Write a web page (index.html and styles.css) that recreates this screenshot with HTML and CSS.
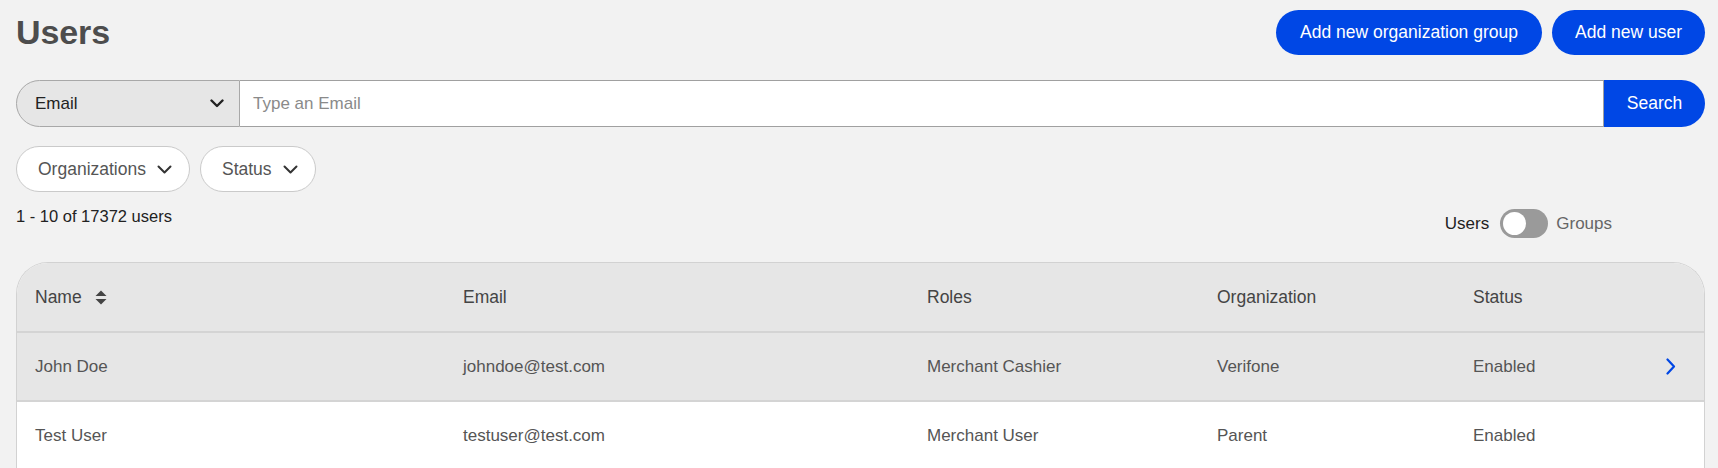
FILE: index.html
```html
<!DOCTYPE html>
<html lang="en">
<head>
<meta charset="utf-8">
<title>Users</title>
<link rel="stylesheet" href="styles.css">
</head>
<body>
<div class="page">
  <header class="top">
    <h1 class="title">Users</h1>
    <div class="actions">
      <button class="btn btn-group">Add new organization group</button>
      <button class="btn btn-user">Add new user</button>
    </div>
  </header>

  <div class="search">
    <div class="select">
      <span>Email</span>
      <svg class="chev" width="14" height="9" viewBox="0 0 14 9"><path d="M1.5 1.5 L7 7 L12.5 1.5" fill="none" stroke="#222" stroke-width="2.4" stroke-linecap="round" stroke-linejoin="round"/></svg>
    </div>
    <div class="input">Type an Email</div>
    <button class="search-btn">Search</button>
  </div>

  <div class="filters">
    <button class="chip">Organizations
      <svg class="chev" width="15" height="9" viewBox="0 0 15 9"><path d="M1.5 1.5 L7.5 7.5 L13.5 1.5" fill="none" stroke="#333" stroke-width="2" stroke-linecap="round" stroke-linejoin="round"/></svg>
    </button>
    <button class="chip">Status
      <svg class="chev" width="15" height="9" viewBox="0 0 15 9"><path d="M1.5 1.5 L7.5 7.5 L13.5 1.5" fill="none" stroke="#333" stroke-width="2" stroke-linecap="round" stroke-linejoin="round"/></svg>
    </button>
  </div>

  <div class="meta">
    <div class="count">1 - 10 of 17372 users</div>
    <div class="switch-group">
      <span class="lbl-on">Users</span>
      <span class="toggle"><span class="knob"></span></span>
      <span class="lbl-off">Groups</span>
    </div>
  </div>

  <div class="table">
    <div class="row head">
      <div class="cell">Name
        <svg class="sort" width="12" height="15" viewBox="0 0 12 15"><polygon points="0.5,6 6,0.5 11.5,6" fill="#444"/><polygon points="0.5,9 6,14.5 11.5,9" fill="#444"/></svg>
      </div>
      <div class="cell">Email</div>
      <div class="cell">Roles</div>
      <div class="cell">Organization</div>
      <div class="cell">Status</div>
    </div>
    <div class="row active">
      <div class="cell">John Doe</div>
      <div class="cell">johndoe@test.com</div>
      <div class="cell">Merchant Cashier</div>
      <div class="cell">Verifone</div>
      <div class="cell last">Enabled
        <svg class="go" width="10" height="17" viewBox="0 0 10 17"><path d="M1.5 1.5 L8 8.5 L1.5 15.5" fill="none" stroke="#0047e5" stroke-width="2.2" stroke-linecap="round" stroke-linejoin="round"/></svg>
      </div>
    </div>
    <div class="row">
      <div class="cell">Test User</div>
      <div class="cell">testuser@test.com</div>
      <div class="cell">Merchant User</div>
      <div class="cell">Parent</div>
      <div class="cell last">Enabled</div>
    </div>
  </div>
</div>
</body>
</html>
```

FILE: styles.css
```css
* { box-sizing: border-box; }

html, body {
  margin: 0;
  background: #f2f2f2;
  font-family: "Liberation Sans", Arial, sans-serif;
  color: #222;
}

.page {
  padding: 10px 13px 0 16px;
  height: 468px;
  overflow: hidden;
}

.top {
  display: flex;
  justify-content: space-between;
  align-items: center;
  height: 45px;
}

.title {
  margin: 0;
  font-size: 34px;
  line-height: 45px;
  font-weight: 700;
  color: #4d4d4d;
  letter-spacing: -0.1px;
}

.actions {
  display: flex;
  gap: 10px;
}

.btn {
  height: 45px;
  border: none;
  border-radius: 23px;
  background: #0047e5;
  color: #fff;
  font-family: inherit;
  font-size: 17.5px;
  display: flex;
  align-items: center;
  justify-content: center;
  padding: 0;
}

.btn-group { width: 266px; }
.btn-user { width: 153px; }

.search {
  display: flex;
  height: 47px;
  margin-top: 25px;
}

.select {
  width: 224px;
  background: #e6e6e6;
  border: 1px solid #a8a8a8;
  border-radius: 24px 0 0 24px;
  display: flex;
  align-items: center;
  justify-content: space-between;
  padding: 0 15px 0 18px;
  font-size: 17px;
  color: #222;
}

.input {
  flex: 1;
  background: #fff;
  border: 1px solid #a0a0a0;
  border-left: none;
  display: flex;
  align-items: center;
  padding-left: 13px;
  font-size: 17px;
  color: #8a8a8a;
}

.search-btn {
  width: 101px;
  border: none;
  background: #0047e5;
  color: #fff;
  border-radius: 0 24px 24px 0;
  font-family: inherit;
  font-size: 17.5px;
  padding: 0;
}

.filters {
  display: flex;
  gap: 10px;
  margin-top: 19px;
}

.chip {
  height: 46px;
  background: #fff;
  border: 1px solid #cacaca;
  border-radius: 23px;
  display: flex;
  align-items: center;
  gap: 11px;
  padding: 0 17px 0 21px;
  font-family: inherit;
  font-size: 17.5px;
  color: #555;
}

.meta {
  display: flex;
  justify-content: space-between;
  align-items: flex-start;
}

.count {
  margin-top: 14px;
  font-size: 16.5px;
  line-height: 20px;
  color: #222;
}

.switch-group {
  margin-top: 17px;
  margin-right: 93px;
  display: flex;
  align-items: center;
  height: 29px;
  font-size: 17px;
}

.lbl-on { color: #222; }
.lbl-off { color: #666; margin-left: 8px; }

.toggle {
  width: 48px;
  height: 29px;
  margin-left: 11px;
  border-radius: 15px;
  background: #9a9a9a;
  display: flex;
  align-items: center;
  padding-left: 3px;
}

.knob {
  width: 23px;
  height: 23px;
  border-radius: 50%;
  background: #fff;
}

.table {
  margin-top: 24px;
  border: 1px solid #d2d2d2;
  border-bottom: none;
  border-radius: 32px 32px 0 0;
  overflow: hidden;
  background: #fff;
}

.row {
  display: grid;
  grid-template-columns: 428px 464px 290px 256px 1fr;
  padding-left: 18px;
  height: 69px;
  align-items: center;
  border-bottom: 2px solid #d4d4d4;
  font-size: 17px;
  color: #555;
}

.row.head {
  background: #e6e6e6;
  height: 70px;
  font-size: 17.5px;
  color: #444;
}

.row.active { background: #e6e6e6; }

.cell {
  display: flex;
  align-items: center;
}

.sort { margin-left: 13px; }

.cell.last {
  justify-content: space-between;
  padding-right: 28px;
}
```
